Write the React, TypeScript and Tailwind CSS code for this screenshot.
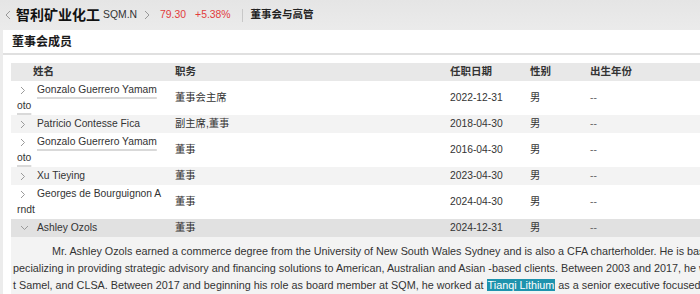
import React from 'react';

type Member = {
    name: string[];
    link?: boolean;
    title: string;
    date: string;
    bg: string;
    open?: boolean;
};

const members: Member[] = [
    { name: ['Gonzalo Guerrero Yamam', 'oto'], link: true, title: '董事会主席', date: '2022-12-31', bg: 'bg-white' },
    { name: ['Patricio Contesse Fica'], title: '副主席,董事', date: '2018-04-30', bg: 'bg-[#f3f3f3]' },
    { name: ['Gonzalo Guerrero Yamam', 'oto'], link: true, title: '董事', date: '2016-04-30', bg: 'bg-white' },
    { name: ['Xu Tieying'], title: '董事', date: '2023-04-30', bg: 'bg-[#f3f3f3]' },
    { name: ['Georges de Bourguignon A', 'rndt'], title: '董事', date: '2024-04-30', bg: 'bg-white' },
    { name: ['Ashley Ozols'], title: '董事', date: '2024-12-31', bg: 'bg-[#e1e1e1]', open: true },
];

const font = "font-['Liberation_Sans','Noto_Sans_CJK_SC',sans-serif]";

function Chevron({ open }: { open?: boolean }) {
    // small thin arrow before each name
    return (
        <span className="inline-flex w-[20px] items-center pl-[3px] align-middle">
            {open ? (
                <svg width="9" height="6" viewBox="0 0 9 6" fill="none">
                    <path d="M1 1l3.5 3.5L8 1" stroke="#9a9a9a" strokeWidth="1" />
                </svg>
            ) : (
                <svg width="6" height="9" viewBox="0 0 6 9" fill="none">
                    <path d="M1 1l3.5 3.5L1 8" stroke="#9a9a9a" strokeWidth="1" />
                </svg>
            )}
        </span>
    );
}

export default function App() {
    return (
        <div className={`w-[700px] h-[294px] overflow-hidden bg-[#ececec] text-[#333] ${font}`}>
            {/* Top bar */}
            <div className="h-[30px] flex items-center bg-gradient-to-b from-[#e5e5e5] to-[#ebebeb] pl-[5px]">
                <svg width="6" height="10" viewBox="0 0 6 10" fill="none" className="mr-[5px]">
                    <path d="M5 1L1 5l4 4" stroke="#999" strokeWidth="1" />
                </svg>
                <span className="text-[14px] font-bold text-[#111]">智利矿业化工</span>
                <span className="ml-[3px] text-[10.4px] text-[#333]">SQM.N</span>
                <svg width="6" height="10" viewBox="0 0 6 10" fill="none" className="ml-[7px]">
                    <path d="M1 1l4 4-4 4" stroke="#999" strokeWidth="1" />
                </svg>
                <span className="ml-[10px] text-[10.4px] text-[#e23c3c]">79.30</span>
                <span className="ml-[9px] text-[10.4px] text-[#e23c3c]">+5.38%</span>
                <span className="ml-[11px] h-[13px] w-px bg-[#c8c8c8]" />
                <span className="ml-[8px] text-[10.5px] font-bold text-[#222]">董事会与高管</span>
            </div>

            {/* Panel */}
            <div className="ml-[3px] h-[264px] bg-white">
                <div className="h-[25px] border-b-2 border-[#e0e0e0] pl-[9px] flex items-center">
                    <h2 className="text-[12px] font-bold text-[#1a1a1a]">董事会成员</h2>
                </div>

                <div className="ml-[8px] mt-[8px] text-[10.3px]">
                    {/* Header */}
                    <div className="grid grid-cols-[164px_275px_80px_60px_1fr] h-[18px] items-center bg-[#e8e8e8] font-bold text-[10.5px] text-[#333]">
                        <span className="pl-[22px]">姓名</span>
                        <span>职务</span>
                        <span>任职日期</span>
                        <span>性别</span>
                        <span>出生年份</span>
                    </div>

                    {members.map((m, i) => (
                        <div
                            key={i}
                            className={`grid grid-cols-[164px_275px_80px_60px_1fr] items-center py-px leading-[16px] ${m.bg}`}
                        >
                            <div className="pl-[6px] whitespace-nowrap">
                                <Chevron open={m.open} />
                                <span className={m.link ? 'underline decoration-[#d9d9d9] decoration-2 underline-offset-[4px]' : ''}>
                                    {m.name[0]}
                                    {m.name[1] && (
                                        <>
                                            <br />
                                            {m.name[1]}
                                        </>
                                    )}
                                </span>
                            </div>
                            <span className="text-[10.3px]">{m.title}</span>
                            <span>{m.date}</span>
                            <span>男</span>
                            <span className="text-[#666]">--</span>
                        </div>
                    ))}

                    {/* Expanded bio */}
                    <div className="bg-[#f3f3f3] pt-[6px] pl-[2px] text-[10.8px] leading-[17px] whitespace-nowrap overflow-hidden">
                        <p className="indent-[39px]">
                            Mr. Ashley Ozols earned a commerce degree from the University of New South Wales Sydney and is also a CFA charterholder. He is based in Santiago, s
                        </p>
                        <p>
                            pecializing in providing strategic advisory and financing solutions to American, Australian and Asian -based clients. Between 2003 and 2017, he worked at Macquarie, Gran
                        </p>
                        <p>
                            t Samel, and CLSA. Between 2017 and beginning his role as board member at SQM, he worked at{' '}
                            <span className="bg-[#1e93ad] text-white px-px">Tianqi Lithium</span> as a senior executive focused on international business.
                        </p>
                    </div>
                </div>
            </div>
        </div>
    );
}
